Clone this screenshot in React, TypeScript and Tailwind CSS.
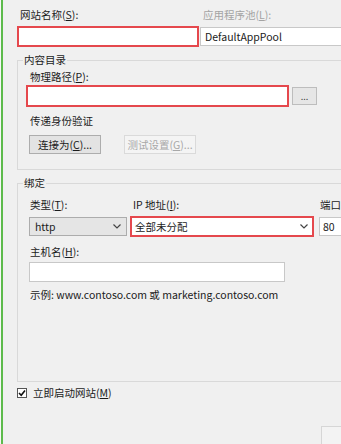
import React from 'react'

const font = { fontFamily: '"Noto Sans CJK SC", "Liberation Sans", sans-serif' }

function Chevron(): React.ReactElement {
  return (
    <svg width="8" height="5" viewBox="0 0 8 5" className="shrink-0">
      <path d="M0.5 0.5 L4 4 L7.5 0.5" fill="none" stroke="#444" strokeWidth="1.2" />
    </svg>
  )
}

export default function App(): React.ReactElement {
  return (
    <div
      className="flex w-[341px] h-[444px] overflow-hidden bg-[#f0f0f0] text-[10.5px] leading-[14px] text-[#1b1b1b]"
      style={font}
    >
      <div className="w-[1px] shrink-0 bg-[#f7f7f7]" />
      <div className="w-[2px] shrink-0 bg-[#5dbb4c]" />

      <div className="flex-1 min-w-0">
        {/* 网站名称 / 应用程序池 */}
        <div className="flex mt-[8px]">
          <div className="ml-[14px]">
            <div className="ml-[3px]">
              网站名称(<span className="underline">S</span>):
            </div>
            <div className="mt-[4px] w-[182px] h-[21px] border-2 border-[#e5484d] bg-white" />
          </div>
          <div className="ml-[1px]">
            <div className="ml-[3px] text-[#a3a3a3]">
              应用程序池(<span className="underline">L</span>):
            </div>
            <div className="mt-[5px] w-[160px] h-[19px] border border-[#c8c8c8] bg-white pl-[4px] leading-[17px]">
              DefaultAppPool
            </div>
          </div>
        </div>

        {/* 内容目录 */}
        <div className="relative mt-[13px] ml-[14px] w-[400px] h-[110px] border-l border-t border-b border-[#d9d9d9] pl-[8px] pt-[9px]">
          <span className="absolute -top-[8px] left-[5px] bg-[#f0f0f0] px-[1px]">内容目录</span>
          <div className="ml-[4px]">
            物理路径(<span className="underline">P</span>):
          </div>
          <div className="flex items-center mt-[1px]">
            <div className="w-[263px] h-[22px] border-2 border-[#e5484d] bg-white" />
            <div className="ml-[3px] w-[25px] h-[18px] border border-[#bdbdbd] bg-[#e6e6e6] flex items-center justify-center text-[9px] leading-[9px] text-[#444]">
              ...
            </div>
          </div>
          <div className="ml-[4px] mt-[7px]">传递身份验证</div>
          <div className="flex mt-[7px] ml-[3px]">
            <div className="w-[72px] h-[19px] border border-[#adadad] bg-[#e3e3e3] flex items-center justify-center">
              连接为(<span className="underline">C</span>)...
            </div>
            <div className="ml-[23px] w-[72px] h-[19px] border border-[#dadada] bg-[#f4f4f4] text-[#a8a8a8] flex items-center justify-center">
              测试设置(<span className="underline">G</span>)...
            </div>
          </div>
        </div>

        {/* 绑定 */}
        <div className="relative mt-[13px] ml-[14px] w-[400px] h-[199px] border-l border-t border-b border-[#d9d9d9] pl-[11px] pt-[14px]">
          <span className="absolute -top-[8px] left-[5px] bg-[#f0f0f0] px-[1px]">绑定</span>
          <div className="flex">
            <div className="w-[101px]">
              <div className="ml-[1px]">
                类型(<span className="underline">T</span>):
              </div>
              <div className="mt-[5px] w-[98px] h-[19px] border border-[#acacac] bg-[#e5e5e5] flex items-center justify-between pl-[5px] pr-[5px]">
                <span>http</span>
                <Chevron />
              </div>
            </div>
            <div className="w-[189px]">
              <div className="ml-[3px]">
                IP 地址(<span className="underline">I</span>):
              </div>
              <div className="mt-[4px] w-[184px] h-[21px] border-2 border-[#e5484d] bg-white flex items-center justify-between pl-[3px] pr-[4px]">
                <span>全部未分配</span>
                <Chevron />
              </div>
            </div>
            <div>
              <div className="ml-[1px]">端口</div>
              <div className="mt-[5px] w-[40px] h-[19px] border border-[#c8c8c8] bg-white pl-[3px] leading-[17px]">80</div>
            </div>
          </div>
          <div className="mt-[8px] ml-[1px]">
            主机名(<span className="underline">H</span>):
          </div>
          <div className="mt-[3px] w-[256px] h-[20px] border border-[#c8c8c8] bg-white" />
          <div className="mt-[6px] ml-[1px]">示例: www.contoso.com 或 marketing.contoso.com</div>
        </div>

        {/* 立即启动网站 */}
        <div className="flex items-center mt-[4px] ml-[14px]">
          <div className="w-[10px] h-[10px] border border-[#555] bg-white flex items-center justify-center">
            <svg width="8" height="8" viewBox="0 0 8 8">
              <path d="M1 4 L3.2 6.2 L7 1.5" fill="none" stroke="#111" strokeWidth="1.6" />
            </svg>
          </div>
          <span className="ml-[6px]">
            立即启动网站(<span className="underline">M</span>)
          </span>
        </div>

        <div className="flex justify-end mt-[26px]">
          <div className="w-[20px] h-[24px] border-l border-t border-[#d6d6d6] bg-[#f3f3f3]" />
        </div>
      </div>
    </div>
  )
}
